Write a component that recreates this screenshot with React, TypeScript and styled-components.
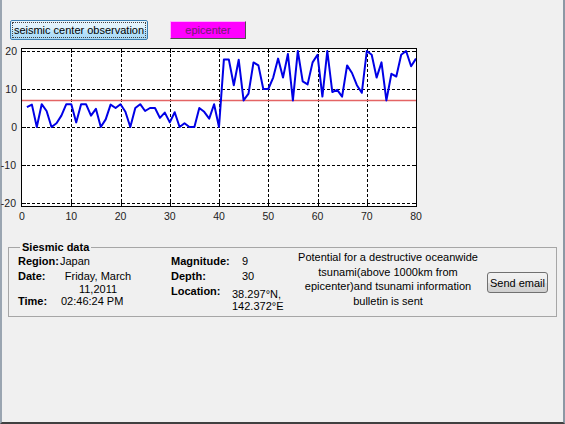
import React from "react";
import styled, { createGlobalStyle } from "styled-components";

const GlobalStyle = createGlobalStyle`
  html, body {
    margin: 0;
    padding: 0;
    background: #f0f0f0;
  }
  body {
    font-family: "Liberation Sans", Arial, sans-serif;
    font-size: 11px;
    color: #000;
  }
`;

// samples for t = 1..80
const signal = [
  5.2, 5.9, 0, 6, 4.2, 0, 1, 3, 6, 6,
  1.2, 6, 6, 3, 4.8, 0, 2, 5.9, 5, 6,
  4, 0, 5, 6, 4.2, 5, 5, 2.4, 3.8, 1.2,
  3.9, 0, 1, 0, 0, 5, 4, 2.2, 6, 0,
  17.8, 17.8, 11, 17.7, 7, 8.8, 17, 16.2, 10, 10,
  13, 18, 13, 19.2, 7, 20, 12, 11.2, 17, 19,
  8, 20, 9.2, 9.8, 8, 16.2, 14.2, 11, 9, 20,
  19, 13, 17, 7, 14, 13.3, 19, 20, 16, 18,
];

const X0 = 20;
const XS = 4.925;
const Y0 = 83;
const YS = 3.8;
const px = (t: number) => X0 + XS * t;
const py = (v: number) => Y0 - YS * v;
const crisp = (n: number) => Math.round(n) + 0.5;

const xTicks = [0, 10, 20, 30, 40, 50, 60, 70, 80];
const yTicks = [20, 10, 0, -10, -20];

const Chart = () => {
  const points = signal.map((v, i) => `${px(i + 1).toFixed(1)},${py(v).toFixed(1)}`).join(" ");
  return (
    <ChartSvg width={430} height={182} viewBox="0 0 430 182">
      <rect x={19.5} y={4.5} width={395} height={158} fill="#fff" />
      <g stroke="#000" strokeWidth={1} strokeDasharray="3 2">
        {xTicks.slice(1, -1).map((t) => (
          <line key={t} x1={crisp(px(t))} x2={crisp(px(t))} y1={5} y2={162} />
        ))}
        {yTicks.map((v) => (
          <line key={v} x1={20} x2={414} y1={crisp(py(v))} y2={crisp(py(v))} />
        ))}
      </g>
      <g stroke="#000" strokeWidth={1}>
        {xTicks.slice(1, -1).map((t) => (
          <React.Fragment key={t}>
            <line x1={crisp(px(t))} x2={crisp(px(t))} y1={5} y2={9} />
            <line x1={crisp(px(t))} x2={crisp(px(t))} y1={158} y2={162} />
          </React.Fragment>
        ))}
        {yTicks.map((v) => (
          <React.Fragment key={v}>
            <line x1={20} x2={24} y1={crisp(py(v))} y2={crisp(py(v))} />
            <line x1={410} x2={414} y1={crisp(py(v))} y2={crisp(py(v))} />
          </React.Fragment>
        ))}
      </g>
      <line x1={20} x2={414} y1={py(7)} y2={py(7)} stroke="#e46464" strokeWidth={1.5} />
      <polyline points={points} fill="none" stroke="#0000e6" strokeWidth={2} strokeLinejoin="round" />
      <rect x={19.5} y={4.5} width={395} height={158} fill="none" stroke="#000" strokeWidth={1} />
      <g fill="#222" fontSize={10.5} fontFamily='"Liberation Sans", Arial, sans-serif'>
        {yTicks.map((v) => (
          <text key={v} x={v < 0 ? 14 : 15} y={py(v) + 4} textAnchor="end">
            {v}
          </text>
        ))}
        {xTicks.map((t) => (
          <text key={t} x={px(t)} y={176} textAnchor="middle">
            {t}
          </text>
        ))}
      </g>
    </ChartSvg>
  );
};

const App = () => {
  return (
    <>
      <GlobalStyle />
      <Window>
        <Toolbar>
          <ObserveButton>seismic center observation</ObserveButton>
          <EpicenterButton>epicenter</EpicenterButton>
        </Toolbar>
        <Chart />
        <GroupBox>
          <GroupTitle>Siesmic data</GroupTitle>
          <GroupBody>
            <DataColumn $width={153} $labelWidth={42} $rows="15px 25px 15px">
              <Label>Region:</Label>
              <Value>Japan</Value>
              <Label>Date:</Label>
              <DateValue>
                Friday, March
                <br />
                11,2011
              </DateValue>
              <Label>Time:</Label>
              <Value $indent={1}>02:46:24 PM</Value>
            </DataColumn>
            <DataColumn $width={121} $labelWidth={61} $rows="15px 15px 15px">
              <Label>Magnitude:</Label>
              <Value $indent={10}>9</Value>
              <Label>Depth:</Label>
              <Value $indent={10}>30</Value>
              <Label>Location:</Label>
              <LocationValue>
                38.297°N,
                <br />
                142.372°E
              </LocationValue>
            </DataColumn>
            <Notice>
              Potential for a destructive oceanwide tsunami(above 1000km from epicenter)and tsunami
              information bulletin is sent
            </Notice>
            <SendButton>Send email</SendButton>
          </GroupBody>
        </GroupBox>
      </Window>
    </>
  );
};

export default App;

const Window = styled.div`
  box-sizing: border-box;
  width: 565px;
  height: 424px;
  border-left: 2px solid #9aa5b1;
  border-right: 2px solid #8c98a4;
  border-bottom: 2px solid #404040;
  background: #f0f0f0;
`;

const Toolbar = styled.div`
  display: flex;
  align-items: center;
  height: 20px;
  padding: 20px 0 0 8px;
`;

const ObserveButton = styled.button`
  box-sizing: border-box;
  width: 138px;
  height: 20px;
  padding: 0;
  border: 1px solid #3c7fb1;
  border-radius: 2px;
  background: linear-gradient(#eaf6fd 0%, #d9f0fc 50%, #bee6fd 51%, #a7d9f5 100%);
  outline: 1px dotted #444;
  outline-offset: -3px;
  font-family: "Liberation Sans", Arial, sans-serif;
  font-size: 11px;
  color: #000;
`;

const EpicenterButton = styled.button`
  box-sizing: border-box;
  width: 76px;
  height: 18px;
  margin-left: 22px;
  padding: 0;
  border: 1px solid;
  border-color: #ffb0ff #505050 #505050 #ffb0ff;
  background: #ff00ff;
  font-family: "Liberation Sans", Arial, sans-serif;
  font-size: 11px;
  color: #6e1f6e;
`;

const ChartSvg = styled.svg`
  display: block;
  margin-top: 4px;
  overflow: visible;
`;

const GroupBox = styled.fieldset`
  margin: 15px 6px 0 6px;
  padding: 0 6px 7px 9px;
  border: 1px solid #a6a6a6;
  min-width: 0;
`;

const GroupTitle = styled.legend`
  margin-left: 2px;
  padding: 0 2px;
  font-weight: bold;
  line-height: 13px;
`;

const GroupBody = styled.div`
  display: flex;
  align-items: flex-start;
`;

const DataColumn = styled.div<{ $width: number; $labelWidth: number; $rows: string }>`
  width: ${(p) => p.$width}px;
  flex-shrink: 0;
  display: grid;
  grid-template-columns: ${(p) => p.$labelWidth}px auto;
  grid-template-rows: ${(p) => p.$rows};
  line-height: 15px;
  white-space: nowrap;
`;

const Label = styled.span`
  font-weight: bold;
`;

const Value = styled.span<{ $indent?: number }>`
  padding-left: ${(p) => p.$indent ?? 0}px;
`;

const DateValue = styled.span`
  width: 76px;
  text-align: center;
  line-height: 13px;
  padding-top: 1px;
`;

const LocationValue = styled.span`
  padding-top: 4px;
  line-height: 12px;
`;

const Notice = styled.div`
  width: 192px;
  flex-shrink: 0;
  margin-top: -4px;
  text-align: center;
  line-height: 14.5px;
`;

const SendButton = styled.button`
  box-sizing: border-box;
  width: 61px;
  height: 21px;
  margin: 18px 0 0 3px;
  padding: 0;
  border: 1px solid #707070;
  border-radius: 3px;
  background: linear-gradient(#f2f2f2 0%, #ebebeb 50%, #dddddd 51%, #cfcfcf 100%);
  font-family: "Liberation Sans", Arial, sans-serif;
  font-size: 11px;
  color: #000;
`;
